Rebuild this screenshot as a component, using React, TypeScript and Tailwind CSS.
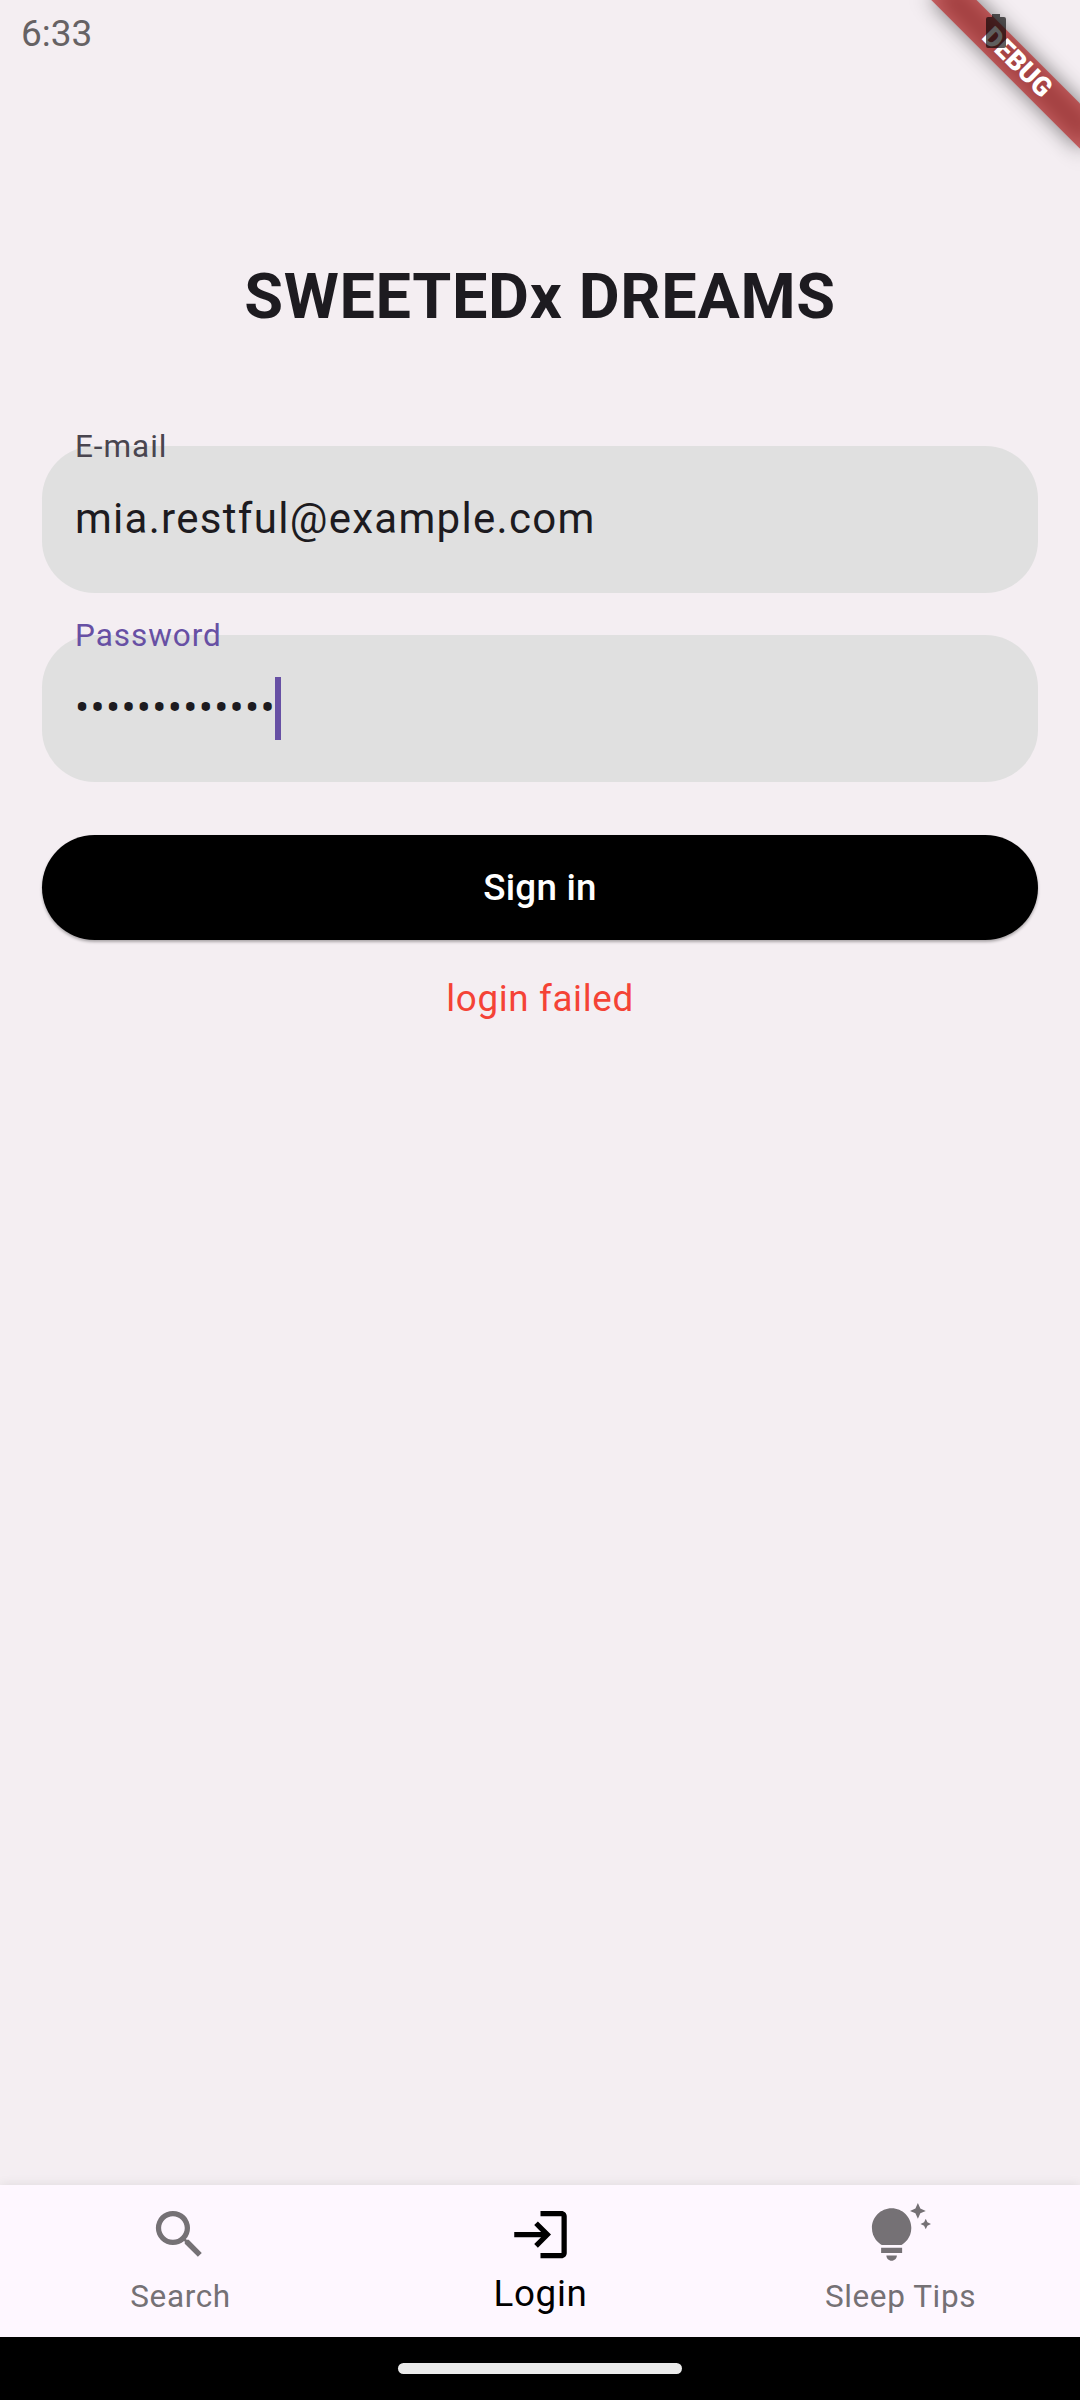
import { useState } from "react";
import type { ComponentType } from "react";
import { MdLogin, MdSearch, MdTipsAndUpdates } from "react-icons/md";

function DebugBanner() {
  return (
    <div className="pointer-events-none absolute right-0 top-0 h-[220px] w-[220px] overflow-hidden">
      <div className="absolute left-[51.9px] top-[47.4px] h-[31.5px] w-[210px] rotate-45">
        <div className="absolute inset-0 bg-black/50 blur-[10.4px]" />
        <div className="absolute inset-0 flex items-center justify-center bg-[#b71c1c]/63 text-[26.8px] font-black leading-none text-white">
          DEBUG
        </div>
      </div>
    </div>
  );
}

function StatusBar() {
  return (
    <header className="flex h-[66px] items-center justify-between pl-[21px] pr-[74px] text-[#666264]">
      <time className="pt-[2px] text-[37px] leading-[66px]">6:33</time>
      <svg className="relative mb-[4px] h-[34px] w-[20px]" viewBox="0 0 20 34" fill="black" fillOpacity="0.63">
        <path d="M6 0h8v3h4a2 2 0 0 1 2 2v27a2 2 0 0 1-2 2H2a2 2 0 0 1-2-2V5a2 2 0 0 1 2-2h4z" />
      </svg>
    </header>
  );
}

function Field({ label, value, active }: { label: string; value: string; active?: boolean }) {
  return (
    <div className="relative flex h-[147px] items-center rounded-[52.5px] bg-[#e0e0e0] px-[33px]">
      <label
        className={`absolute left-[33px] top-[-19px] text-[31.5px] leading-[40px] tracking-[0.95px] ${active ? "text-[#6750a4]" : "text-[#49454f]"}`}
      >
        {label}
      </label>
      <span className="mb-[2px] text-[42px] leading-[63px] tracking-[1.29px] text-[#1d1b20]">{value}</span>
      {active && <span className="mb-[1px] -ml-[0.8px] h-[63px] w-[6px] bg-[#6750a4]" />}
    </div>
  );
}

const tabs: { name: string; icon: ComponentType<{ className?: string }> }[] = [
  { name: "Search", icon: MdSearch },
  { name: "Login", icon: MdLogin },
  { name: "Sleep Tips", icon: MdTipsAndUpdates },
];

export default function App() {
  const [selected, setSelected] = useState("Login");

  return (
    <div className="relative flex h-[2400px] w-[1080px] flex-col overflow-hidden bg-[#f4eef2] font-[Roboto,sans-serif]">
      <DebugBanner />
      <div className="relative">
        <StatusBar />
      </div>

      <main className="flex flex-1 flex-col px-[42px] pt-[191px]">
        <h1 className="text-center text-[63px] font-bold leading-[80px] tracking-[0.66px] text-[#1d1b20]">
          SWEETEDx DREAMS
        </h1>
        <div className="mt-[109px] flex flex-col gap-[42px]">
          <Field label="E-mail" value="mia.restful@example.com" />
          <Field label="Password" value="•••••••••••••" active />
        </div>
        <button className="mt-[52.5px] h-[105px] rounded-full bg-black pt-[1px] text-[36.75px] font-medium leading-[52px] tracking-[0.26px] text-white shadow-[0_2px_3px_rgba(0,0,0,0.3)]">
          Sign in
        </button>
        <p className="mt-[33.5px] text-center text-[36.75px] leading-[52px] tracking-[0.66px] text-[#f44336]">
          login failed
        </p>
      </main>

      <nav className="relative grid h-[152px] grid-cols-3 bg-[#fef7ff] shadow-[0_-1px_10px_rgba(0,0,0,0.08)]">
        {tabs.map(({ name, icon: Icon }) => {
          const on = name === selected;
          return (
            <button
              key={name}
              onClick={() => setSelected(name)}
              className={`flex flex-col items-center pt-[18px] ${on ? "text-black" : "text-[#757175]"}`}
            >
              <Icon className={on ? "h-[63px] w-[63px]" : "mr-[1px] h-[63px] w-[63px]"} />
              <span
                className={
                  on
                    ? "mt-[3px] pl-[1px] text-[36.75px] leading-[50px] tracking-[0.66px]"
                    : "mt-[6px] pl-[1px] text-[31.5px] leading-[50px] tracking-[0.6px]"
                }
              >
                {name}
              </span>
            </button>
          );
        })}
      </nav>

      <footer className="relative flex h-[63px] items-center justify-center bg-black">
        <div className="h-[11px] w-[284px] rounded-full bg-[#ebebeb]" />
      </footer>
    </div>
  );
}
